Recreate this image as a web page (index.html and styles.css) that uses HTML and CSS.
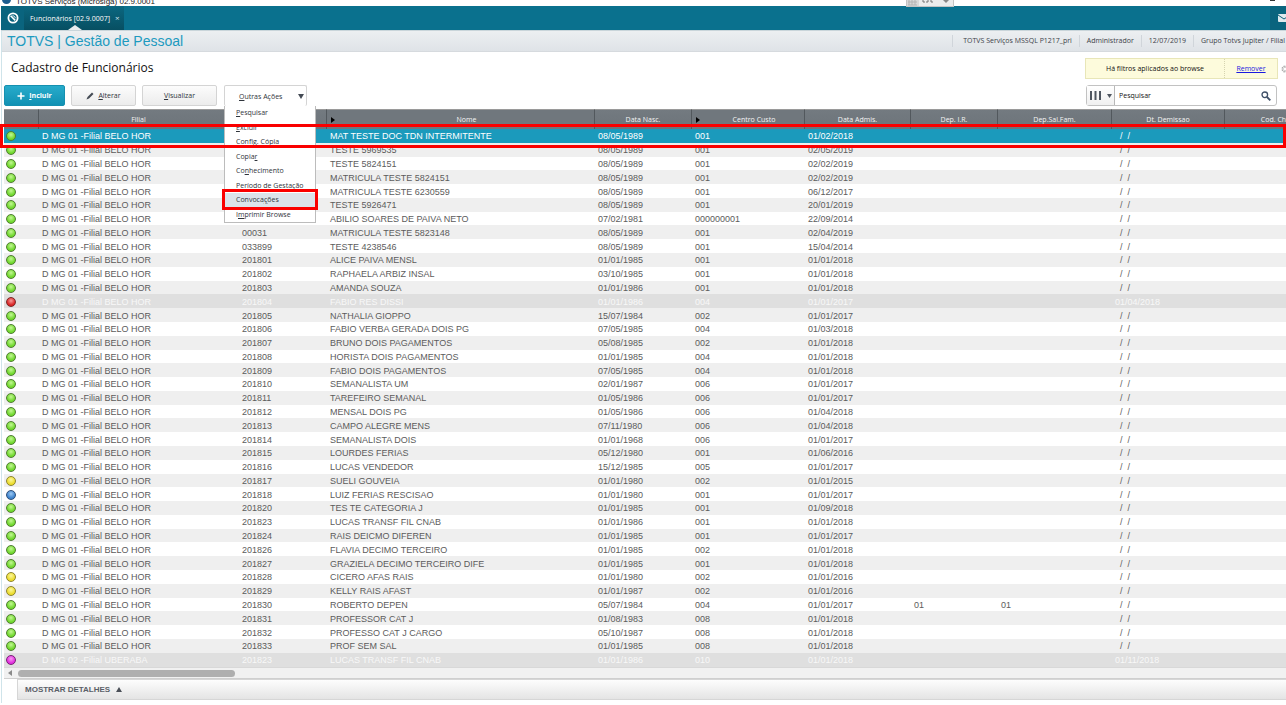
FILE: index.html
```html
<!DOCTYPE html>
<html lang="pt-BR">
<head>
    <meta charset="UTF-8">
    <meta name="viewport" content="width=device-width, initial-scale=1.0">
    <title>Cadastro de Funcionários</title>
    <link rel="stylesheet" href="styles.css">
</head>
<body>

<div class="titlebar">
    <span class="app-icon"></span>
    <span class="app-title">TOTVS Serviços (Microsiga) 02.9.0001</span>
    <div class="viewer">
        <svg width="46" height="6" viewBox="0 0 46 6">
            <rect x="0" y="0" width="12" height="6" fill="#d9d9d9"/>
            <path d="M2 0v5M5 0v5M8 0v5M1 2h9M1 5h9" stroke="#b5b5b5" fill="none"/>
            <path d="M16 0v2h2M21 0v2h-2M24 0v2h2" stroke="#777" fill="none"/>
            <path d="M36 0h6l-3 3z" fill="#888"/>
        </svg>
    </div>
    <span class="minimize"></span>
</div>

<div class="window">
    <div class="tabs">
        <button class="home" aria-label="Início">
            <svg width="12" height="12" viewBox="0 0 12 12" fill="none" stroke="#fff">
                <circle cx="6" cy="6" r="4.6" stroke-width="1.8"/>
                <path d="M3.6 3.8l4.6 4.6" stroke-width="1.6"/>
                <path d="M5.4 3.8c1.800 0 2.800 1 2.800 2.400" stroke-width="1"/>
            </svg>
        </button>
        <div class="tab">
            <span>Funcionários [02.9.0007]</span>
            <button class="tab-close" aria-label="Fechar">×</button>
        </div>
        <button class="mail" aria-label="Mensagens">
            <svg width="12" height="8" viewBox="0 0 12 8">
                <rect width="12" height="8" rx="1" fill="#dfe9ed"/>
                <path d="M0 1l6 4 6-4" fill="none" stroke="#0a5f78"/>
            </svg>
        </button>
    </div>

    <div class="module">
        <h1>TOTVS | Gestão de Pessoal</h1>
        <ul class="session">
            <li>TOTVS Serviços MSSQL P1217_pri</li>
            <li>Administrador</li>
            <li>12/07/2019</li>
            <li>Grupo Totvs Jupiter / Filial</li>
        </ul>
    </div>

    <div class="heading">
        <h2>Cadastro de Funcionários</h2>
        <div class="filter">
            <span class="filter-text">Há filtros aplicados ao browse</span>
            <a href="#" class="filter-remove">Remover</a>
        </div>
        <svg class="gear" width="8" height="8" viewBox="0 0 8 8">
            <circle cx="4" cy="4" r="2.5" fill="none" stroke="#aaa" stroke-width="2" stroke-dasharray="1.300 0.700"/>
        </svg>
    </div>

    <div class="toolbar">
        <button class="btn btn-primary">
            <svg width="8" height="8" viewBox="0 0 8 8"><path d="M4 0.500v7M0.500 4h7" stroke="#fff" stroke-width="1.600"/></svg>
            <span><u>I</u>ncluir</span>
        </button>
        <button class="btn btn-edit">
            <svg width="8" height="8" viewBox="0 0 8 8"><path d="M0.500 7.500l1-2.500L6 0.500 7.500 2 3 6.500z" fill="#444b55"/></svg>
            <span><u>A</u>lterar</span>
        </button>
        <button class="btn btn-view"><span><u>V</u>isualizar</span></button>
        <div class="dropdown">
            <button class="btn btn-more">
                <span><u>O</u>utras Ações</span>
                <svg width="6" height="5" viewBox="0 0 6 5"><path d="M0 0h6L3 5z" fill="#444b55"/></svg>
            </button>
            <ul class="menu">
                <li><u>P</u>esquisar</li>
                <li><u>E</u>xcluir</li>
                <li>Config. <u>C</u>ópia</li>
                <li>Copia<u>r</u></li>
                <li>Co<u>n</u>hecimento</li>
                <li>Período de <u>G</u>estação</li>
                <li class="active">Convoca<u>ç</u>ões</li>
                <li>I<u>m</u>primir Browse</li>
            </ul>
            <div class="mark mark-menu"></div>
        </div>
        <div class="search">
            <button class="search-columns" aria-label="Colunas">
                <svg width="11" height="9" viewBox="0 0 11 9"><path d="M1 0v9M5.500 0v9M10 0v9" stroke="#4f5660" stroke-width="2"/></svg>
                <svg width="5" height="4" viewBox="0 0 5 4"><path d="M0 0h5L2.500 4z" fill="#4f5660"/></svg>
            </button>
            <input type="text" class="search-input" placeholder="Pesquisar" aria-label="Pesquisar">
            <button class="search-go" aria-label="Buscar">
                <svg width="10" height="10" viewBox="0 0 10 10" fill="none" stroke="#3f5068">
                    <circle cx="3.800" cy="3.800" r="2.800" stroke-width="1.300"/>
                    <path d="M6 6l3.300 3.300" stroke-width="1.800"/>
                </svg>
            </button>
        </div>
    </div>

    <div class="grid">
        <table>
            <colgroup>
                <col class="c-status"><col class="c-filial"><col class="c-matricula"><col class="c-nome">
                <col class="c-nasc"><col class="c-custo"><col class="c-admis"><col class="c-ir">
                <col class="c-fam"><col class="c-demissao"><col class="c-chapa">
            </colgroup>
            <thead>
                <tr>
                    <th></th>
                    <th>Filial</th>
                    <th></th>
                    <th class="sorted">Nome</th>
                    <th>Data Nasc.</th>
                    <th class="sorted">Centro Custo</th>
                    <th>Data Admis.</th>
                    <th>Dep. I.R.</th>
                    <th>Dep.Sal.Fam.</th>
                    <th>Dt. Demissao</th>
                    <th>Cod. Chapa</th>
                </tr>
            </thead>
            <tbody id="rows"></tbody>
        </table>
        <div class="mark mark-row"></div>
    </div>

    <div class="scrollbar">
        <svg width="4" height="6" viewBox="0 0 4 6"><path d="M4 0v6L0 3z" fill="#8a8a8a"/></svg>
        <div class="thumb"></div>
    </div>

    <button class="details">
        MOSTRAR DETALHES
        <svg width="6" height="5" viewBox="0 0 6 5"><path d="M0 5h6L3 0z" fill="#4a4f57"/></svg>
    </button>
</div>

<script src="script.js"></script>
</body>
</html>
```

FILE: styles.css
```css
* {
    box-sizing: border-box;
}

body {
    margin: 0;
    background-color: #fff;
    font-family: "Open Sans", "Liberation Sans", Arial, sans-serif;
    font-size: 7px;
    color: #333;
    overflow: hidden;
}

button,
input {
    font-family: inherit;
    font-size: inherit;
    color: inherit;
    margin: 0;
    padding: 0;
    border: none;
    background: none;
}

ul {
    list-style: none;
    margin: 0;
    padding: 0;
}

/* title bar */
.titlebar {
    display: flex;
    align-items: flex-end;
    height: 6px;
    padding-left: 2px;
    position: relative;
}

.app-icon {
    width: 9px;
    height: 9px;
    margin-bottom: 2px;
    border-radius: 50%;
    background-color: #1d5d8f;
}

.app-title {
    margin-left: 5px;
    font-family: "Liberation Sans", Arial, sans-serif;
    font-size: 8px;
    line-height: 9px;
    color: #222;
}

.viewer {
    position: absolute;
    left: 906px;
    top: 0;
    height: 7px;
    background-color: #ececec;
    border: 1px solid #c4c4c4;
    border-top: none;
    z-index: 2;
}

.viewer svg,
.tabs svg {
    display: block;
}

.minimize {
    margin: 0 11px 5px auto;
    width: 5px;
    height: 1px;
    background-color: #333;
}

.window {
    margin-left: 1px;
    border-left: 1px solid #cfe4ea;
    padding-bottom: 3px;
}

/* tabs */
.tabs {
    display: flex;
    align-items: stretch;
    height: 25px;
    margin-left: -1px;
    background-color: #0a718e;
    border-bottom: 1px solid #c9d5da;
}

.home {
    display: flex;
    align-items: center;
    justify-content: center;
    width: 23px;
    background-color: #0a647e;
}

.tab {
    display: flex;
    align-items: center;
    gap: 5px;
    padding: 0 4px 0 6px;
    background: linear-gradient(#0b6780, #074f62);
    color: #fff;
    position: relative;
}

.tab::after {
    content: "";
    position: absolute;
    left: 44px;
    bottom: 0;
    border: 7px solid transparent;
    border-top: none;
    border-bottom: 5px solid #e9ecef;
}

.tab-close {
    font-size: 8px;
    line-height: 10px;
    color: #cfe3ea;
}

.mail {
    display: flex;
    align-items: center;
    width: 16px;
    margin-left: auto;
    padding-left: 8px;
    background-color: #0a647e;
    overflow: hidden;
}

.mail svg {
    flex: none;
}

/* module header */
.module {
    display: flex;
    align-items: center;
    height: 21px;
    padding-left: 5px;
    background: linear-gradient(#eceff1, #dfe3e7);
    border-bottom: 1px solid #d6dade;
}

.module h1 {
    flex: 1;
    margin: 0;
    font-family: "Liberation Sans", Arial, sans-serif;
    font-size: 14px;
    font-weight: normal;
    line-height: 20px;
    color: #1d9abf;
}

.session {
    display: flex;
    color: #3c4148;
    white-space: nowrap;
}

.session li {
    padding: 0 7px;
    line-height: 12px;
    border-left: 1px solid #d0d5da;
}

.session li:first-child {
    padding-left: 10px;
}

.session li:last-child {
    padding-right: 1px;
}

/* page heading */
.heading {
    display: flex;
    align-items: center;
    height: 33px;
    padding-left: 9px;
}

.heading h2 {
    flex: 1;
    margin: 0;
    font-size: 12px;
    font-weight: normal;
    line-height: 18px;
    padding-bottom: 2px;
    color: #111;
}

.filter {
    display: flex;
    width: 193px;
    line-height: 19px;
    text-align: center;
    background-color: #fdfbdc;
    border: 1px solid #e8e6b8;
    color: #111;
}

.filter-text {
    flex: 1;
}

.filter-remove {
    width: 53px;
    border-left: 1px dotted #d5d3b0;
    color: #1a1ae0;
}

.gear {
    margin-left: 3px;
    margin-right: -3px;
}

/* toolbar */
.toolbar {
    display: flex;
    padding: 0 9px 3px 3px;
    margin-left: -1px;
}

.btn {
    display: flex;
    align-items: center;
    justify-content: center;
    gap: 4px;
    height: 21px;
    background: linear-gradient(#fcfcfc, #ececec);
    border: 1px solid #d4d4d4;
    border-radius: 2px;
    color: #2f343b;
}

.btn-primary {
    width: 61px;
    background: linear-gradient(#27abcb, #1191b3);
    border-color: #1590b0;
    color: #fff;
    font-weight: bold;
}

.btn-edit {
    width: 65px;
    margin-left: 6px;
}

.btn-view {
    width: 75px;
    margin-left: 6px;
}

.dropdown {
    position: relative;
    margin-left: 7px;
}

.btn-more {
    width: 83px;
    justify-content: space-between;
    padding: 0 2px 0 14px;
    background: #fff;
    border-bottom: none;
}

.menu {
    position: absolute;
    top: 21px;
    left: 0;
    z-index: 5;
    display: flex;
    flex-direction: column;
    width: 92px;
    height: 117px;
    background-color: #fff;
    border: 1px solid #bcbcbc;
    border-top: none;
    color: #2f343b;
}

.menu li {
    flex: 1;
    padding-left: 11px;
    line-height: 14px;
    white-space: nowrap;
}

.menu .active {
    background-color: #dce3ea;
}

/* red highlight frames */
.mark {
    position: absolute;
    z-index: 10;
    border: 3px solid #fa0000;
    pointer-events: none;
}

.mark-menu {
    top: 104px;
    left: -2px;
    width: 96px;
    height: 21px;
}

.mark-row {
    top: 15px;
    left: -4px;
    right: 0;
    height: 24px;
}

.search {
    display: flex;
    width: 191px;
    height: 21px;
    margin-left: auto;
    border: 1px solid #c2c2c2;
    border-radius: 3px;
}

.search-columns {
    display: flex;
    align-items: center;
    justify-content: center;
    gap: 6px;
    width: 28px;
    background: linear-gradient(#fff, #f0f0f0);
    border-right: 1px solid #b8b8b8;
}

.search-input {
    flex: 1;
    min-width: 0;
    padding-left: 4px;
    outline: none;
}

.search-input::placeholder {
    color: #111;
    opacity: 1;
}

.search-go {
    display: flex;
    align-items: center;
    padding: 0 5px;
}

/* employee grid */
.grid {
    position: relative;
    margin-left: 2px;
}

.grid table {
    width: 100%;
    height: 558px;
    table-layout: fixed;
    border-collapse: separate;
    border-spacing: 0;
    font-family: "Liberation Sans", Arial, sans-serif;
    font-size: 9px;
    color: #5c5c5c;
}

.c-status { width: 35px; }
.c-filial { width: 200px; }
.c-matricula { width: 88px; }
.c-nome { width: 268px; }
.c-nasc { width: 97px; }
.c-custo { width: 113px; }
.c-admis { width: 106px; }
.c-ir { width: 87px; }
.c-fam { width: 114px; }
.c-demissao { width: 113px; }
.c-chapa { width: 110px; }

.grid th {
    height: 20px;
    padding: 0;
    background: linear-gradient(#737a80, #6d747a);
    border-top: 1px solid #9a9a9a;
    border-right: 1px solid #52585d;
    font-family: "Open Sans", "Liberation Sans", sans-serif;
    font-size: 7px;
    font-weight: normal;
    line-height: 10px;
    color: #f4f4f4;
}

.grid .sorted {
    padding-left: 12px;
    background: url("data:image/svg+xml,%3Csvg xmlns='http://www.w3.org/2000/svg' width='4' height='6'%3E%3Cpath d='M0 0v6l4-3z'/%3E%3C/svg%3E") 4px 7px no-repeat #70777d;
}

.grid td {
    padding: 1px 0 0 3px;
    line-height: 12px;
    white-space: pre;
    overflow: hidden;
}

.grid td:first-child {
    padding-left: 2px;
}

.grid tbody tr:nth-child(even) {
    background-color: #efefef;
}

.grid tbody .selected {
    background-color: #1b9abc;
    color: #fff;
}

.grid tbody .dismissed {
    background-color: #dfdfdf;
    color: #f8f8f8;
}

.dot {
    display: block;
    width: 10px;
    height: 10px;
    border: 1px solid #4f7d32;
    border-radius: 50%;
    background: radial-gradient(circle at 50% 35%, #c3f794, #6fd82c 65%);
}

.dot-red {
    border-color: #7a2a2a;
    background: radial-gradient(circle at 50% 35%, #f79a9a, #d92323 65%);
}

.dot-yellow {
    border-color: #8d8530;
    background: radial-gradient(circle at 50% 35%, #fbf79c, #ecdc2c 65%);
}

.dot-blue {
    border-color: #2f4f78;
    background: radial-gradient(circle at 50% 35%, #9cc8f2, #3c82cc 65%);
}

.dot-pink {
    border-color: #7a2078;
    background: radial-gradient(circle at 50% 35%, #fa9af5, #e02cdc 65%);
}

/* horizontal scroll */
.scrollbar {
    display: flex;
    align-items: center;
    gap: 6px;
    height: 12px;
    margin-left: 2px;
    padding-left: 4px;
    background-color: #f1f1f1;
    border-top: 1px solid #d8d8d8;
    border-bottom: 1px solid #cfcfcf;
}

.thumb {
    width: 17%;
    height: 7px;
    border-radius: 4px;
    background-color: #afafaf;
}

.details {
    display: flex;
    align-items: center;
    gap: 6px;
    width: calc(100% - 15px);
    height: 21px;
    margin-left: 15px;
    padding-left: 7px;
    background: linear-gradient(#fdfdfd, #e4e4e4);
    border: 1px solid #d6d6d6;
    border-right: none;
    font-family: "Liberation Sans", Arial, sans-serif;
    font-size: 8px;
    font-weight: bold;
    color: #5a6068;
}
```

FILE: script.js
```js
// status, matricula, nome, nascimento, centro de custo, admissao
const employees = [
    ["", "", "MAT TESTE DOC TDN INTERMITENTE", "08/05/1989", "001", "01/02/2018"],
    ["", "", "TESTE 5969535", "08/05/1989", "001", "02/05/2019"],
    ["", "", "TESTE 5824151", "08/05/1989", "001", "02/02/2019"],
    ["", "", "MATRICULA TESTE 5824151", "08/05/1989", "001", "02/02/2019"],
    ["", "", "MATRICULA TESTE 6230559", "08/05/1989", "001", "06/12/2017"],
    ["", "", "TESTE 5926471", "08/05/1989", "001", "20/01/2019"],
    ["", "", "ABILIO SOARES DE PAIVA NETO", "07/02/1981", "000000001", "22/09/2014"],
    ["", "00031", "MATRICULA TESTE 5823148", "08/05/1989", "001", "02/04/2019"],
    ["", "033899", "TESTE 4238546", "08/05/1989", "001", "15/04/2014"],
    ["", "201801", "ALICE PAIVA MENSL", "01/01/1985", "001", "01/01/2018"],
    ["", "201802", "RAPHAELA ARBIZ INSAL", "03/10/1985", "001", "01/01/2018"],
    ["", "201803", "AMANDA SOUZA", "01/01/1986", "001", "01/01/2018"],
    ["red", "201804", "FABIO RES DISSI", "01/01/1986", "004", "01/01/2017", "", "", "01/04/2018"],
    ["", "201805", "NATHALIA GIOPPO", "15/07/1984", "002", "01/01/2017"],
    ["", "201806", "FABIO VERBA GERADA DOIS PG", "07/05/1985", "004", "01/03/2018"],
    ["", "201807", "BRUNO DOIS PAGAMENTOS", "05/08/1985", "002", "01/01/2018"],
    ["", "201808", "HORISTA DOIS PAGAMENTOS", "01/01/1985", "004", "01/01/2018"],
    ["", "201809", "FABIO DOIS PAGAMENTOS", "07/05/1985", "004", "01/01/2018"],
    ["", "201810", "SEMANALISTA UM", "02/01/1987", "006", "01/01/2017"],
    ["", "201811", "TAREFEIRO SEMANAL", "01/05/1986", "006", "01/01/2017"],
    ["", "201812", "MENSAL DOIS PG", "01/05/1986", "006", "01/04/2018"],
    ["", "201813", "CAMPO ALEGRE MENS", "07/11/1980", "006", "01/04/2018"],
    ["", "201814", "SEMANALISTA DOIS", "01/01/1968", "006", "01/01/2017"],
    ["", "201815", "LOURDES FERIAS", "05/12/1980", "001", "01/06/2016"],
    ["", "201816", "LUCAS VENDEDOR", "15/12/1985", "005", "01/01/2017"],
    ["yellow", "201817", "SUELI GOUVEIA", "01/01/1980", "002", "01/01/2015"],
    ["blue", "201818", "LUIZ FERIAS RESCISAO", "01/01/1980", "001", "01/01/2017"],
    ["", "201820", "TES TE CATEGORIA J", "01/01/1985", "001", "01/09/2018"],
    ["", "201823", "LUCAS TRANSF FIL CNAB", "01/01/1986", "001", "01/01/2018"],
    ["", "201824", "RAIS DEICMO DIFEREN", "01/01/1985", "001", "01/01/2017"],
    ["", "201826", "FLAVIA DECIMO TERCEIRO", "01/01/1985", "002", "01/01/2018"],
    ["", "201827", "GRAZIELA DECIMO TERCEIRO DIFE", "01/01/1985", "001", "01/01/2018"],
    ["yellow", "201828", "CICERO AFAS RAIS", "01/01/1980", "002", "01/01/2016"],
    ["yellow", "201829", "KELLY RAIS AFAST", "01/01/1987", "002", "01/01/2016"],
    ["", "201830", "ROBERTO DEPEN", "05/07/1984", "004", "01/01/2017", "01", "01"],
    ["", "201831", "PROFESSOR CAT J", "01/08/1983", "008", "01/01/2018"],
    ["", "201832", "PROFESSO CAT J CARGO", "05/10/1987", "008", "01/01/2018"],
    ["", "201833", "PROF SEM SAL", "01/01/1985", "008", "01/01/2018"],
    ["pink", "201823", "LUCAS TRANSF FIL CNAB", "01/01/1986", "010", "01/01/2018", "", "", "01/11/2018"]
];

const tbody = document.getElementById("rows");

employees.forEach(function (employee, index) {
    const [status, matricula, nome, nasc, custo, admis, ir, fam, demissao] = employee;
    const filial = status == "pink" ? "D MG 02 -Filial UBERABA" : "D MG 01 -Filial BELO HOR";
    const row = document.createElement("tr");

    if (index == 0) row.className = "selected";
    if (demissao) row.className = "dismissed";

    const values = [filial, matricula, nome, nasc, custo, admis, ir || "", fam || "", demissao || "  /  /", ""];
    row.innerHTML = '<td><span class="dot dot-' + (status || "green") + '"></span></td>' +
        values.map(value => "<td>" + value + "</td>").join("");
    tbody.appendChild(row);
});
```
